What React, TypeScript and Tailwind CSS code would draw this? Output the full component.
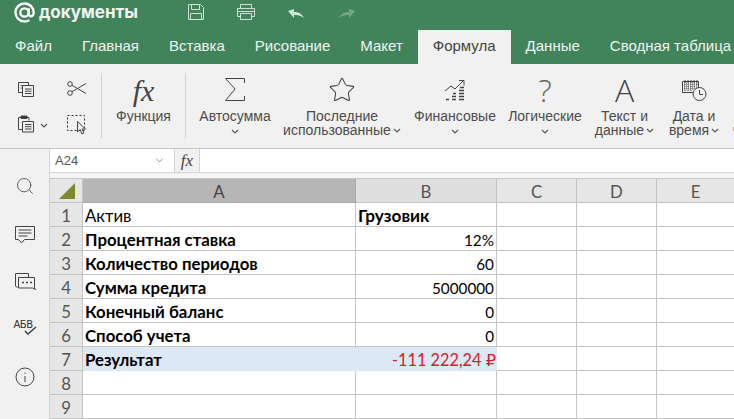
import { ChevronDown, Search, Star } from 'lucide-react'

const tabs = ['Файл', 'Главная', 'Вставка', 'Рисование', 'Макет', 'Формула', 'Данные', 'Сводная таблица']

const rows: { n: number; a: string; b: string; boldA?: boolean; boldB?: boolean; left?: boolean }[] = [
  { n: 1, a: 'Актив', b: 'Грузовик', boldB: true, left: true },
  { n: 2, a: 'Процентная ставка', b: '12%', boldA: true },
  { n: 3, a: 'Количество периодов', b: '60', boldA: true },
  { n: 4, a: 'Сумма кредита', b: '5000000', boldA: true },
  { n: 5, a: 'Конечный баланс', b: '0', boldA: true },
  { n: 6, a: 'Способ учета', b: '0', boldA: true },
  { n: 7, a: 'Результат', b: '', boldA: true },
  { n: 8, a: '', b: '' },
  { n: 9, a: '', b: '' },
]

function Chevron({ className = '' }: { className?: string }) {
  return (
    <svg width="8" height="5" viewBox="0 0 8 5" fill="none" stroke="#555" strokeWidth="1.1" className={`shrink-0 ${className}`}>
      <path d="M1 1l3 3 3-3" />
    </svg>
  )
}

function Logo() {
  return (
    <svg width="21" height="21" viewBox="0 0 21 21" fill="none" stroke="white" strokeWidth="2.3">
      <circle cx="10.5" cy="10.5" r="4.2" />
      <path d="M14.7 6.3v5.6c0 3.2 4.6 3.2 4.9-.4.5-5.6-3.600-10-9.100-10C5.500 1.500 1.500 5.500 1.500 10.500s4 9 9 9c1.900 0 3.500-.5 4.900-1.400" />
    </svg>
  )
}

function SaveIcon() {
  return (
    <svg width="18" height="18" viewBox="0 0 18 18" fill="none" stroke="#cfe0d6" strokeWidth="1">
      <path d="M1.500 1.500h12l3 3v12h-15z" />
      <path d="M4.500 1.500v5h8v-5M3.500 16.500v-6h11v6" />
    </svg>
  )
}

function PrintIcon() {
  return (
    <svg width="20" height="18" viewBox="0 0 20 18" fill="none" stroke="#cfe0d6" strokeWidth="1">
      <path d="M4.500 5.500v-4h11v4M4.500 13.500h-3v-8h17v8h-3" />
      <path d="M4.500 10.500h11v6h-11zM1.500 8.500h17" />
    </svg>
  )
}

function UndoIcon({ flip = false, color }: { flip?: boolean; color: string }) {
  return (
    <svg width="18" height="12" viewBox="0 0 18 12" fill={color} className={flip ? '-scale-x-100' : ''}>
      <path d="M1 3l6-2v3c5 0 8 2 10 6-3-2.500-6-3.300-10-3v3z" />
    </svg>
  )
}

function CopyIcon() {
  return (
    <svg width="18" height="17" viewBox="0 0 18 17" fill="none" stroke="#444" strokeWidth="1">
      <path d="M5.500 11.500h-4v-10h10v3" />
      <path d="M3.500 4.500h5M3.500 7h2" strokeWidth="0.8" />
      <path d="M5.500 4.500h11v11h-11z" />
      <path d="M8 8h6.500M8 10.200h6.500M8 12.500h6.500" />
    </svg>
  )
}

function PasteIcon() {
  return (
    <svg width="18" height="18" viewBox="0 0 18 18" fill="none" stroke="#444" strokeWidth="1">
      <path d="M4 2.500h-2.500v12h4" />
      <path d="M10 2.500h2v3" />
      <path d="M4 1h6v2.500h-6z" fill="#333" />
      <path d="M5.500 6.500h11v10.500h-11z" />
      <path d="M8 9.500h6.500M8 11.700h6.500M8 14h6.500" />
    </svg>
  )
}

function ScissorsIcon() {
  return (
    <svg width="20" height="15" viewBox="0 0 20 15" fill="none" stroke="#444" strokeWidth="1">
      <circle cx="3" cy="3" r="2.300" />
      <circle cx="3" cy="12" r="2.300" />
      <path d="M5 4.300l14 8.200M5 10.700l14-8.200" />
    </svg>
  )
}

function SelectAllIcon() {
  return (
    <svg width="20" height="21" viewBox="0 0 20 21" fill="none" stroke="#333" strokeWidth="1">
      <path d="M.5 .5h17v15h-17z" strokeDasharray="2 2" />
      <path d="M10.500 6.500v10.500l2.500-2.500 2 4.500 2-1-2-4h3.500z" fill="#f1f1f1" stroke="#444" />
    </svg>
  )
}

function SigmaIcon() {
  return (
    <svg width="22" height="25" viewBox="0 0 22 25" fill="none" stroke="#444" strokeWidth="1">
      <path d="M20.500 6V1.500H1.500L11 12 1.500 23.500h19V19" />
    </svg>
  )
}

function FinanceIcon() {
  return (
    <svg width="22" height="22" viewBox="0 0 22 22" fill="none" stroke="#444" strokeWidth="1">
      <path d="M1 12l6-5 4 3 8-8M15 1.500h5v5" />
      <path d="M2 20.500h3M8 20.500h4M15 20.500h5M8 17.500h4M15 17.500h5M9 14.500h3M15 14.500h5M15 11.500h5M16 8.500h4" strokeWidth="1.500" />
    </svg>
  )
}

function CalendarIcon() {
  return (
    <svg width="26" height="24" viewBox="0 0 26 24" fill="none" stroke="#444" strokeWidth="1">
      <path d="M1.500 3.500h16v11h-16z" />
      <path d="M3 5h13M3 7h13M3 9h13M3 11h9M4 2v11M7 2v11M10 2v11M13 2v9M16 2v6" strokeDasharray="1 1" />
      <circle cx="18.500" cy="16" r="6.500" fill="#f1f1f1" />
      <path d="M18.500 12v4.500h3.500" />
    </svg>
  )
}

function ToolItem({ width, icon, lines, chevronInline, chevronBelow }: {
  width: string
  icon: React.ReactNode
  lines: string[]
  chevronInline?: boolean
  chevronBelow?: boolean
}) {
  return (
    <div className={`flex shrink-0 flex-col items-center pt-[9px] ${width}`}>
      <div className="flex h-[33px] items-center justify-center">{icon}</div>
      <div className="mt-[3px] flex flex-col items-center text-[14px] leading-[14px] whitespace-nowrap text-[#4c4c4c]">
        {lines.map((l, i) => (
          <div key={l} className="flex items-center gap-[2px]">
            {l}
            {chevronInline && i === lines.length - 1 && <Chevron />}
          </div>
        ))}
        {chevronBelow && <Chevron className="mt-[6px]" />}
      </div>
    </div>
  )
}

function Separator() {
  return <div className="mt-[9px] h-[65px] w-px shrink-0 bg-[#d2d2d2]" />
}

function SideIcons() {
  return (
    <div className="flex w-[50px] shrink-0 flex-col items-center border-r border-[#d4d4d4] bg-[#f1f1f1] pt-[27px] text-[#444]">
      <Search size={20} strokeWidth={1} />
      <svg width="22" height="20" viewBox="0 0 22 20" fill="none" stroke="#444" strokeWidth="1" className="mt-[29px]">
        <path d="M1.500 1.500h19v13h-10l-3 3.500-3-3.500h-3z" />
        <path d="M4.500 5h13M4.500 8h13M4.500 11h9" />
      </svg>
      <svg width="22" height="20" viewBox="0 0 22 20" fill="none" stroke="#444" strokeWidth="1" className="mt-[27px]">
        <path d="M1.500 14V1.500h13V5" />
        <path d="M1.500 14l1.500 1.500 1-1" />
        <path d="M4.500 5.500h16v10.500l1 1.500-3-1.500h-14z" />
        <path d="M8 10.500h2M12 10.500h2M16 10.500h2" strokeWidth="1.500" />
      </svg>
      <div className="relative mt-[28px] h-[18px] w-[22px]">
        <span className="block text-[10px] leading-[10px] tracking-[-0.5px] text-[#333]" style={{ fontFamily: '"DejaVu Sans", sans-serif' }}>АБВ</span>
        <svg width="13" height="10" viewBox="0 0 13 10" fill="none" stroke="#444" strokeWidth="1.600" className="absolute top-[6px] left-[10px]">
          <path d="M1 5l3 3 8-7" />
        </svg>
      </div>
      <svg width="20" height="20" viewBox="0 0 20 20" fill="none" stroke="#444" strokeWidth="1" className="mt-[29px]">
        <circle cx="10" cy="10" r="9" />
        <path d="M10 9v6M10 5.500v1.300" />
      </svg>
    </div>
  )
}

export default function App() {
  return (
    <div className="flex h-[419px] w-[734px] flex-col overflow-hidden bg-white" style={{ fontFamily: '"Liberation Sans", Arial, sans-serif' }}>
      <div className="h-[64px] shrink-0 bg-[#41845c]">
        <div className="flex h-[30px] items-center">
          <div className="ml-[14px] flex w-[173px] shrink-0 items-center gap-[4px] pb-[6px]">
            <Logo />
            <span className="text-[17px] leading-none font-bold text-[#eef4f0]" style={{ fontFamily: 'Inter, sans-serif' }}>документы</span>
          </div>
          <div className="flex w-[49px] pb-[6px]"><SaveIcon /></div>
          <div className="flex w-[51px] pb-[6px]"><PrintIcon /></div>
          <div className="flex w-[51px] pb-[3px]"><UndoIcon color="#d6e4db" /></div>
          <div className="flex pb-[3px]"><UndoIcon flip color="#76a68a" /></div>
        </div>
        <div className="flex h-[34px]">
          {tabs.map((t) => (
            <div
              key={t}
              className={`flex shrink-0 items-center px-[15px] pb-[1px] text-[15px] whitespace-nowrap ${t === 'Формула' ? 'bg-[#f1f1f1] text-[#444]' : 'text-[#eef4f0]'}`}
            >
              {t}
            </div>
          ))}
        </div>
      </div>

      <div className="flex h-[85px] shrink-0 overflow-hidden border-b border-[#c8c8c8] bg-[#f1f1f1]">
        <div className="grid w-[101px] shrink-0 grid-cols-[50px_1fr] grid-rows-[34px_1fr] pt-[17px] pl-[17px]">
          <CopyIcon />
          <ScissorsIcon />
          <div className="flex items-start gap-[5px]">
            <PasteIcon />
            <Chevron className="mt-[8px]" />
          </div>
          <SelectAllIcon />
        </div>
        <Separator />
        <ToolItem
          width="w-[83px]"
          icon={<span className="mt-[2px] text-[30px] leading-none text-[#444] italic" style={{ fontFamily: '"Liberation Serif", serif' }}>fx</span>}
          lines={['Функция']}
        />
        <Separator />
        <ToolItem width="w-[98px]" icon={<SigmaIcon />} lines={['Автосумма']} chevronBelow />
        <ToolItem width="w-[116px]" icon={<Star size={28} strokeWidth={0.9} className="text-[#444]" />} lines={['Последние', 'использованные']} chevronInline />
        <ToolItem width="w-[110px]" icon={<FinanceIcon />} lines={['Финансовые']} chevronBelow />
        <ToolItem width="w-[70px]" icon={<span className="text-[32px] leading-none text-[#666]" style={{ fontFamily: '"Open Sans", sans-serif', fontWeight: 300 }}>?</span>} lines={['Логические']} chevronBelow />
        <ToolItem width="w-[89px]" icon={<span className="text-[32px] leading-none text-[#444]" style={{ fontFamily: '"Open Sans", sans-serif', fontWeight: 300 }}>A</span>} lines={['Текст и', 'данные']} chevronInline />
        <ToolItem width="w-[50px]" icon={<CalendarIcon />} lines={['Дата и', 'время']} chevronInline />
        <div className="mt-[63px] ml-[14px] h-[4px] w-px shrink-0 bg-[#d8a24a]" />
      </div>

      <div className="flex min-h-0 flex-1">
        <SideIcons />
        <div className="min-w-0 flex-1">
          <div className="flex h-[24px] border-b border-[#d4d4d4] bg-white">
            <div className="flex w-[124px] shrink-0 items-center justify-between pr-[9px] pl-[5px] text-[13px] text-[#555]">
              A24
              <ChevronDown size={11} strokeWidth={1.5} />
            </div>
            <div className="flex w-[26px] shrink-0 items-center justify-center border-x border-[#d4d4d4] bg-[#f1f1f1] text-[17px] text-[#444] italic" style={{ fontFamily: '"Liberation Serif", serif' }}>fx</div>
          </div>
          <div className="h-[6px] border-b border-[#c8c8c8] bg-[#f5f5f5]" />

          <div className="grid grid-cols-[33px_273px_141px_80px_80px_77px] text-[16.8px] leading-[26px] text-black" style={{ fontFamily: 'Lato, sans-serif' }}>
            <div className="flex h-[24px] items-center justify-center border-r border-b border-[#c4c4c4] bg-[#e6e6e6]">
              <div className="mt-[1px] ml-[1px] h-0 w-0 border-b-[16px] border-l-[16px] border-b-[#7f8a2c] border-l-transparent" />
            </div>
            <div className="flex h-[24px] items-center justify-center border-r border-b border-[#a9a9a9] bg-[#b6b6b6] pt-[2px] text-[#444]">A</div>
            <div className="flex h-[24px] items-center justify-center border-r border-b border-[#c4c4c4] bg-[#dedede] pt-[2px] text-[#555]">B</div>
            <div className="flex h-[24px] items-center justify-center border-r border-b border-[#c4c4c4] bg-[#e6e6e6] pt-[2px] text-[#555]">C</div>
            <div className="flex h-[24px] items-center justify-center border-r border-b border-[#c4c4c4] bg-[#e6e6e6] pt-[2px] text-[#555]">D</div>
            <div className="flex h-[24px] items-center justify-center border-b border-[#c4c4c4] bg-[#e6e6e6] pt-[2px] text-[#555]">E</div>

            {rows.map((r) => (
              <div key={r.n} className="contents">
                <div className="flex h-[24px] items-center justify-center border-r border-b border-[#c4c4c4] bg-[#e6e6e6] pt-[2px] text-[#555]">{r.n}</div>
                <div className={`h-[24px] border-b pl-[2px] ${r.n === 7 ? 'border-[#dce9f4] bg-[#dce9f4]' : 'border-r border-[#c4c4c4]'} ${r.boldA ? 'font-bold' : ''}`}>{r.a}</div>
                {r.n === 7 ? (
                  <div className="h-[24px] border-b border-[#dce9f4] bg-[#dce9f4] pr-[1px] text-right text-[16.300px] text-[#d4202c]" style={{ fontFamily: 'Lato, "DejaVu Sans", sans-serif' }}>-111 222,24 ₽</div>
                ) : (
                  <div className={`h-[24px] border-r border-b border-[#c4c4c4] px-[2px] ${r.left ? 'text-[17.200px]' : 'text-right text-[15.300px]'} ${r.boldB ? 'font-bold' : ''}`}>{r.b}</div>
                )}
                <div className="h-[24px] border-r border-b border-[#c4c4c4]" />
                <div className="h-[24px] border-r border-b border-[#c4c4c4]" />
                <div className="h-[24px] border-b border-[#c4c4c4]" />
              </div>
            ))}
          </div>
        </div>
      </div>
    </div>
  )
}
